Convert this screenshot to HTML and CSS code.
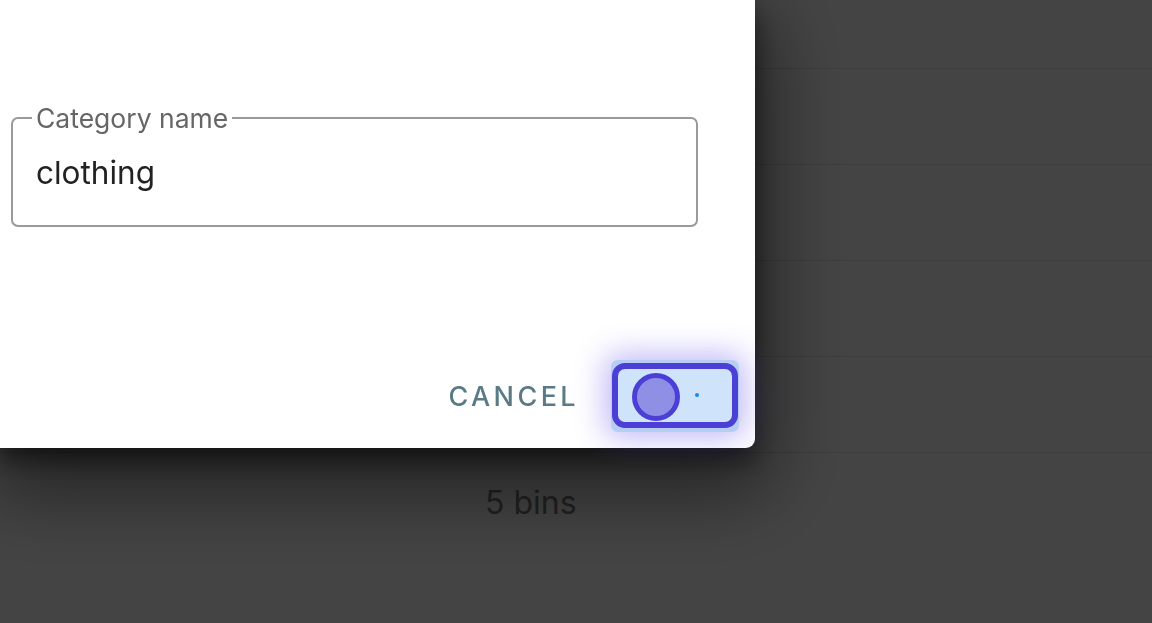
FILE: index.html
```html
<!DOCTYPE html>
<html lang="en-US">
  <head>
    <meta charset="UTF-8" />
    <meta name="viewport" content="width=device-width, initial-scale=1.0" />
    <title>Categories</title>
    <link rel="stylesheet" href="styles.css">
  </head>
  <body>
    <!-- page behind the dialog -->
    <div class="table">
      <div class="row"></div>
      <div class="row"></div>
      <div class="row"></div>
      <div class="row"></div>
      <div class="row"></div>
      <div class="row row-last"><span class="cell">5 bins</span></div>
    </div>

    <div class="backdrop"></div>

    <div class="dialog">
      <div class="dialog-content">
        <div class="field">
          <label class="field-label">Category name</label>
          <span class="field-value">clothing</span>
        </div>
      </div>
      <div class="dialog-actions">
        <button class="btn-text">Cancel</button>
        <button class="btn-toggle">
          <span class="toggle-track">
            <span class="toggle-knob"></span>
            <span class="toggle-dot"></span>
          </span>
        </button>
      </div>
    </div>
  </body>
</html>
```

FILE: styles.css
```css
html, body {
  margin: 0;
  padding: 0;
  height: 100%;
  overflow: hidden;
}

body {
  font-family: "Inter", "Roboto", sans-serif;
  background: #fff;
  color: #222;
}

.table {
  display: flex;
  flex-direction: column;
}
.row {
  height: 95px;
  border-bottom: 1px solid #e2e2e2;
  display: flex;
  align-items: center;
}
.row:first-child {
  height: 68px;
}
.row-last {
  border-bottom: none;
  height: 96px;
}
.cell {
  padding-left: 485px;
  font-size: 32px;
  color: #7d7d7d;
  margin-top: 3px;
}

.backdrop {
  position: fixed;
  inset: 0;
  background: rgba(0, 0, 0, 0.735);
}

.dialog {
  position: fixed;
  left: 0;
  top: 0;
  width: 755px;
  height: 448px;
  background: #fff;
  border-radius: 0 0 9px 0;
  box-shadow: 0 12px 24px rgba(0,0,0,0.5), 0 30px 80px 14px rgba(0,0,0,0.5);
  display: flex;
  flex-direction: column;
}

.dialog-content {
  padding: 117px 57px 0 11px;
  flex: 1;
}

.field {
  position: relative;
  height: 110px;
  box-sizing: border-box;
  border: 2px solid #9a9a9a;
  border-radius: 7px;
  padding: 0 23px;
  display: flex;
  align-items: center;
}
.field-label {
  position: absolute;
  left: 19px;
  top: -15px;
  padding: 0 4px;
  background: #fff;
  font-size: 26.5px;
  line-height: 28px;
  color: #666;
}
.field-value {
  font-size: 31.5px;
  color: #222;
}

.dialog-actions {
  display: flex;
  justify-content: flex-end;
  align-items: center;
  padding: 0 16px 16px 0;
  gap: 32px;
}

.btn-text {
  background: none;
  border: none;
  font-family: inherit;
  font-size: 27px;
  font-weight: 500;
  letter-spacing: 3.4px;
  text-transform: uppercase;
  color: #5a7a86;
  padding: 0;
}

.btn-toggle {
  width: 128px;
  height: 72px;
  padding: 3px 1px 4px 1px;
  box-sizing: border-box;
  border: none;
  border-radius: 7px;
  background: #b7cef4;
  box-shadow: 0 0 30px 6px rgba(92, 70, 235, 0.38);
}
.toggle-track {
  display: flex;
  align-items: center;
  height: 100%;
  box-sizing: border-box;
  border: 6px solid #4c3fd5;
  border-radius: 13px;
  background: #cfe3fa;
  padding-left: 14px;
}
.toggle-knob {
  width: 48px;
  height: 48px;
  box-sizing: border-box;
  border: 5px solid #4c3fd5;
  border-radius: 50%;
  background: #8f8fe6;
  margin-top: 2px;
}
.toggle-dot {
  width: 4px;
  height: 4px;
  border-radius: 50%;
  background: #1b88e6;
  margin-left: 15px;
  margin-top: -1px;
}
```
